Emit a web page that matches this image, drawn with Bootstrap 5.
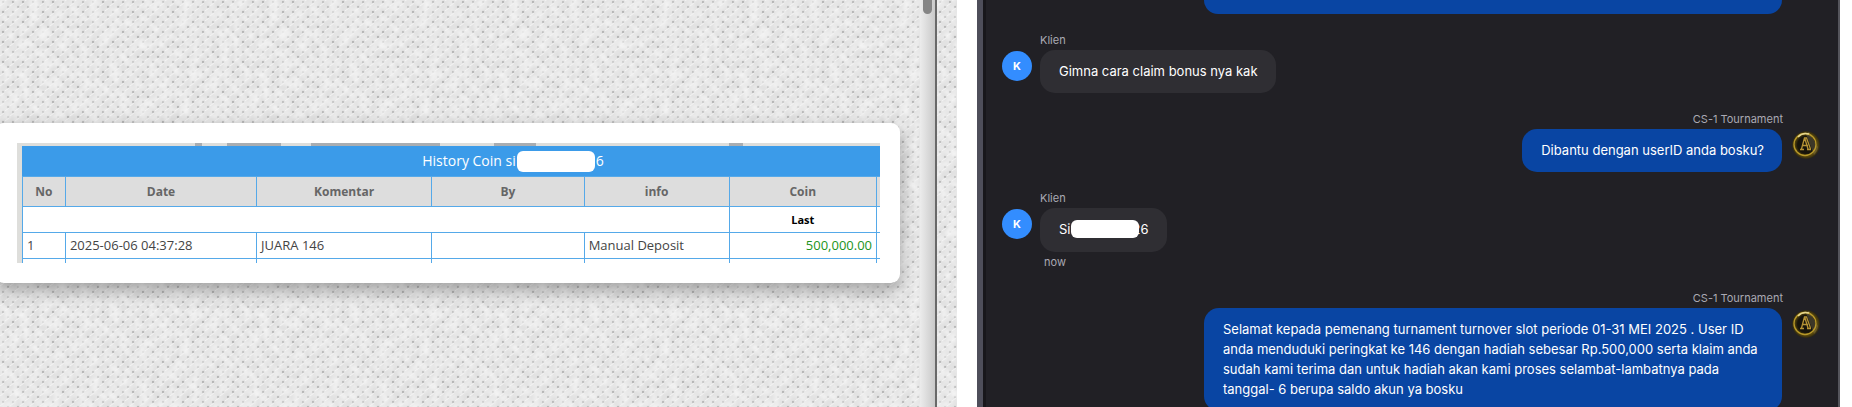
<!DOCTYPE html>
<html lang="id">
<head>
<meta charset="utf-8">
<meta name="viewport" content="width=device-width, initial-scale=1">
<title>Klaim bonus turnamen</title>
<link href="https://cdn.jsdelivr.net/npm/bootstrap@5.3.0/dist/css/bootstrap.min.css" rel="stylesheet">
<style>
body{background:#fff;font-family:Inter,"Liberation Sans",sans-serif;font-size:13px;line-height:20px}
.page{display:grid;grid-template-columns:minmax(0,957fr) minmax(0,863fr);gap:20px;padding-right:12px}
.proof{display:grid;grid-template-columns:1fr 17px 20px}
.texture{background:url("data:image/svg+xml,%3Csvg xmlns='http://www.w3.org/2000/svg' width='240' height='240'%3E%3Cfilter id='n' x='0' y='0' width='100%25' height='100%25'%3E%3CfeTurbulence type='fractalNoise' baseFrequency='.1' numOctaves='2' seed='4' stitchTiles='stitch'/%3E%3CfeColorMatrix values='0 0 0 0 .91 0 0 0 0 .91 0 0 0 0 .91 1.6 0 0 0 -.5'/%3E%3C/filter%3E%3Cpattern id='p' width='10' height='10' patternUnits='userSpaceOnUse'%3E%3Cg fill='%23888' fill-opacity='.5'%3E%3Ccircle cx='3' cy='2' r='1.2'/%3E%3Ccircle cx='8' cy='7' r='1.2'/%3E%3C/g%3E%3Cpath d='M0 6l4-3M5 1l4-3M5 11l4-3' stroke='%23fff' stroke-opacity='.6'/%3E%3C/pattern%3E%3Crect width='240' height='240' fill='%23e2e2e2'/%3E%3Crect width='240' height='240' fill='url(%23p)'/%3E%3Crect width='240' height='240' filter='url(%23n)'/%3E%3C/svg%3E") #e6e6e6}
.track{background:linear-gradient(90deg,#ececec,#c9c9c9);border-right:2px solid #696969;padding:0 3px}
.thumb{height:14px;background:#858585;border-radius:0 0 5px 5px}
.proof-card{margin:123px 20px 0 -5px;padding:20px 20px 20px 22px;background:#fff;border-radius:9px;box-shadow:0 7px 18px rgba(0,0,0,.32)}
.snap{height:120px;overflow:hidden;padding:3px 0 0 5px;background:linear-gradient(#dededb,#dededb) 0 0/5px 100% no-repeat,linear-gradient(90deg,#dededb 0 178px,#a9adb1 178px 185px,#dededb 185px 210px,#a9adb1 210px 264px,#dededb 264px 294px,#a9adb1 294px 423px,#dededb 423px 477px,#a9adb1 477px 519px,#dededb 519px 712px,#a9adb1 712px 726px,#dededb 726px)}
.coin{width:100%;table-layout:fixed;border-collapse:collapse;font-family:"Open Sans","Noto Sans",sans-serif;font-size:13px;line-height:18px;color:#444;background:#fff}
.coin td,.coin th{border:1px solid #55a9e9;padding:0 4px;height:26px}
.coin tbody td{padding-bottom:2px}
.coin caption{caption-side:top;background:#3b9be9;color:#fff;text-align:center;padding:0 0 0 124px;height:30px;line-height:30px;font-size:14px}
.coin thead th{height:30px;background:#ddd;color:#666;text-align:center;font-size:12px}
.coin tr>:last-child{border-right:0}
.coin .last-label{color:#000;font-size:11px;text-align:center}
.coin .amount{color:#219421;text-align:right}
.mask{display:inline-block;background:#fff;vertical-align:middle;position:relative}
.mask-title{width:78px;height:21px;border-radius:6px;margin:0 1px 2px}
.mask-id{width:68px;height:18px;border-radius:6px;margin:0 -6px 2px 0}
.chat{background:#212025;border-left:6px solid #4e4e5a;border-right:2px solid #55555c;box-shadow:inset 3px 0 #18171b;padding:0 18px 0 19px;gap:16px}
.msg{display:grid;grid-template-columns:30px auto;column-gap:8px}
.msg-own{grid-template-columns:auto 30px}
.who{font-size:11px;color:#aaa9b3;grid-column:2;line-height:20px}
.msg-own .who{grid-column:1/-1;text-align:right;margin-right:37px}
.avatar{width:30px;height:30px;border-radius:50%;background:#338dff;color:#fff;font-size:11px;font-weight:700;line-height:30px;text-align:center;margin-top:1px}
.bubble{background:#2f2e33;color:#fff;border-radius:15px;padding:11px 18px 12px 19px;min-height:43px}
.msg-own .bubble{background:#0945a3;max-width:578px}
.stub{height:14px;width:578px;margin-right:38px;background:#0945a3;border-radius:0 0 15px 15px}
</style>
</head>
<body>
<main class="page vh-100 overflow-hidden">
<section class="proof overflow-hidden">
  <div class="texture overflow-hidden">
    <div class="proof-card"><div class="snap">
      <table class="coin">
        <caption>History Coin si<span class="mask mask-title"></span>6</caption>
        <colgroup><col style="width:5%"><col style="width:22.3%"><col style="width:20.4%"><col style="width:17.8%"><col style="width:16.9%"><col style="width:17.2%"><col></colgroup>
        <thead><tr><th>No</th><th>Date</th><th>Komentar</th><th>By</th><th>info</th><th>Coin</th><th class="p-0"></th></tr></thead>
        <tbody>
          <tr><td colspan="5"></td><th class="last-label">Last</th><td class="p-0"></td></tr>
          <tr><td>1</td><td>2025-06-06 04:37:28</td><td>JUARA 146</td><td></td><td>Manual Deposit</td><td class="amount">500,000.00</td><td class="p-0"></td></tr>
          <tr><td></td><td></td><td></td><td></td><td></td><td></td><td class="p-0"></td></tr>
        </tbody>
      </table>
    </div></div>
  </div>
  <div class="track"><div class="thumb"></div></div>
  <div class="texture"></div>
</section>
<section class="chat d-flex flex-column overflow-hidden">
  <div class="stub align-self-end flex-shrink-0"></div>
  <article class="msg align-self-start"><div class="who">Klien</div><div class="avatar">K</div><div class="bubble">Gimna cara claim bonus nya kak</div></article>
  <article class="msg msg-own align-self-end"><div class="who">CS-1 Tournament</div><div class="bubble">Dibantu dengan userID anda bosku?</div>
    <svg width="30" height="32" viewBox="0 0 30 32"><defs><radialGradient id="gold"><stop offset=".6" stop-color="#17140b"/><stop offset=".82" stop-color="#58470c"/><stop offset="1" stop-color="#292415"/></radialGradient><g id="crest"><circle cx="16" cy="16" r="14" fill="url(#gold)"/><path d="M8 8A11 11 0 0 1 16 5l8 21a12 12 0 0 0 4-8L19 3" fill="#aaa07c" opacity=".25"/><circle cx="15" cy="15.500" r="11" fill="none" stroke="#b79829" stroke-width="1.300"/><path d="M8 8a11 11 0 0 1 11-3" fill="none" stroke="#e5d58d" stroke-width="1.500"/><path d="M10 20.500h4M17 20.500h4M11.500 20l3-11h2l4 11M13 16.500h5M15 10l3 10" fill="none" stroke="#b59235" stroke-width="1.300"/></g></defs><use href="#crest"/></svg></article>
  <article class="msg align-self-start"><div class="who">Klien</div><div class="avatar">K</div><div class="d-flex"><div class="bubble text-nowrap">Si<span class="mask mask-id"></span>26</div></div><div class="who ps-1">now</div></article>
  <article class="msg msg-own align-self-end flex-shrink-0"><div class="who">CS-1 Tournament</div><div class="bubble">Selamat kepada pemenang turnament turnover slot periode 01-31 MEI 2025 . User ID anda menduduki peringkat ke 146 dengan hadiah sebesar Rp.500,000 serta klaim anda sudah kami terima dan untuk hadiah akan kami proses selambat-lambatnya pada tanggal- 6 berupa saldo akun ya bosku</div><svg width="30" height="32" viewBox="0 0 30 32"><use href="#crest"/></svg></article>
</section>
</main>
<script src="https://cdn.jsdelivr.net/npm/bootstrap@5.3.0/dist/js/bootstrap.bundle.min.js"></script>
</body>
</html>
